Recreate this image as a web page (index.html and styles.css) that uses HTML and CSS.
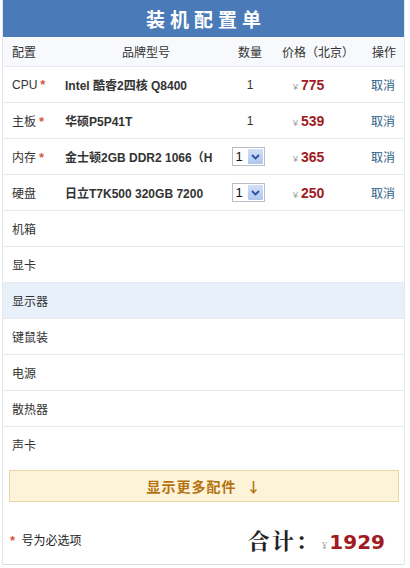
FILE: index.html
```html
<!DOCTYPE html>
<html lang="zh-CN">
<head>
<meta charset="utf-8">
<title>装机配置单</title>
<link rel="stylesheet" href="styles.css">
</head>
<body>
<div class="panel">
  <div class="title">装机配置单</div>
  <div class="row head">
    <div class="c-cat">配置</div>
    <div class="c-name center">品牌型号</div>
    <div class="c-qty">数量</div>
    <div class="c-price center">价格（北京）</div>
    <div class="c-op">操作</div>
  </div>

  <div class="row">
    <div class="c-cat">CPU<span class="req">*</span></div>
    <div class="c-name">Intel 酷睿2四核 Q8400</div>
    <div class="c-qty">1</div>
    <div class="c-price"><span class="yen">¥</span><span class="num">775</span></div>
    <div class="c-op"><span class="link">取消</span></div>
  </div>
  <div class="row">
    <div class="c-cat">主板<span class="req">*</span></div>
    <div class="c-name">华硕P5P41T</div>
    <div class="c-qty">1</div>
    <div class="c-price"><span class="yen">¥</span><span class="num">539</span></div>
    <div class="c-op"><span class="link">取消</span></div>
  </div>
  <div class="row">
    <div class="c-cat">内存<span class="req">*</span></div>
    <div class="c-name">金士顿2GB DDR2 1066（H</div>
    <div class="c-qty"><span class="sel"><span class="sel-v">1</span><span class="sel-b"><svg width="9" height="6" viewBox="0 0 9 6"><path d="M1 1 L4.5 4.5 L8 1" fill="none" stroke="#2c4f9e" stroke-width="1.8"/></svg></span></span></div>
    <div class="c-price"><span class="yen">¥</span><span class="num">365</span></div>
    <div class="c-op"><span class="link">取消</span></div>
  </div>
  <div class="row">
    <div class="c-cat">硬盘</div>
    <div class="c-name">日立T7K500 320GB 7200</div>
    <div class="c-qty"><span class="sel"><span class="sel-v">1</span><span class="sel-b"><svg width="9" height="6" viewBox="0 0 9 6"><path d="M1 1 L4.5 4.5 L8 1" fill="none" stroke="#2c4f9e" stroke-width="1.8"/></svg></span></span></div>
    <div class="c-price"><span class="yen">¥</span><span class="num">250</span></div>
    <div class="c-op"><span class="link">取消</span></div>
  </div>
  <div class="row"><div class="c-cat">机箱</div></div>
  <div class="row"><div class="c-cat">显卡</div></div>
  <div class="row hl"><div class="c-cat">显示器</div></div>
  <div class="row"><div class="c-cat">键鼠装</div></div>
  <div class="row"><div class="c-cat">电源</div></div>
  <div class="row"><div class="c-cat">散热器</div></div>
  <div class="row last"><div class="c-cat">声卡</div></div>

  <div class="more">显示更多配件<span class="arrow">↓</span></div>

  <div class="foot">
    <div class="note"><span class="req">*</span> 号为必选项</div>
    <div class="total"><span class="tlabel">合计：</span><span class="yen big">¥</span><span class="tnum">1929</span></div>
  </div>
</div>
</body>
</html>
```

FILE: styles.css
```css
html, body {
  margin: 0;
  padding: 0;
  background: #ffffff;
}
body {
  font-family: "Liberation Sans", "Noto Sans CJK SC", sans-serif;
  font-size: 12px;
  color: #333333;
}
.panel {
  width: 401px;
  margin-left: 2px;
  border-left: 1px solid #e4e7eb;
  border-right: 1px solid #e4e7eb;
}
.title {
  height: 37px;
  background: #4a7ab7;
  color: #ffffff;
  font-size: 19px;
  font-weight: bold;
  letter-spacing: 5px;
  padding-left: 5px;
  text-align: center;
  line-height: 37px;
  font-family: "Noto Sans CJK SC", sans-serif;
}
.row {
  display: grid;
  grid-template-columns: 60px 166px 42px 92px 1fr;
  align-items: center;
  height: 35px;
  border-bottom: 1px solid #e6e9ed;
}
.row.head {
  height: 29px;
  background: #f7f9fc;
}
.row.hl {
  background: #e8f0fa;
}
.row.last {
  border-bottom: none;
}
.c-cat {
  padding-left: 9px;
  white-space: nowrap;
}
.c-name {
  padding-left: 2px;
  font-weight: bold;
  white-space: nowrap;
}
.head .c-name { font-weight: normal; }
.center { text-align: center; }
.head .c-name.center { padding-left: 0; }
.c-qty {
  text-align: center;
  display: flex;
  justify-content: center;
  align-items: center;
}
.c-price {
  padding-left: 22px;
  display: flex;
  align-items: baseline;
  white-space: nowrap;
}
.head .c-price {
  padding-left: 2px;
  justify-content: center;
}
.c-op {
  padding-left: 8px;
}
.head .c-op {
  padding-left: 9px;
}
.req {
  color: #d65a3c;
  font-weight: bold;
  margin-left: 3px;
  font-size: 13px;
}
.note .req { margin-left: 0; margin-right: 3px; }
.yen {
  color: #a0a0a0;
  font-size: 9px;
  margin-right: 3px;
}
.num {
  color: #a11a1f;
  font-weight: bold;
  font-size: 14px;
}
.link {
  color: #2d6085;
}
.sel {
  display: inline-flex;
  align-items: center;
  width: 31px;
  height: 17px;
  border: 1px solid #b9bfc8;
  background: #fff;
  margin-left: -4px;
}
.sel-v {
  flex: 1;
  text-align: left;
  padding-left: 3px;
  font-size: 13px;
  color: #111;
}
.sel-b {
  width: 15px;
  height: 15px;
  margin-right: 1px;
  background: linear-gradient(#d2e0f8, #b0c6ef);
  border-radius: 1px;
  display: flex;
  align-items: center;
  justify-content: center;
}
.more {
  margin: 8px 5px 0 6px;
  height: 30px;
  border: 1px solid #e6d7a6;
  background: #fdf3d9;
  color: #b5720f;
  font-weight: bold;
  font-size: 14px;
  letter-spacing: 1px;
  text-align: center;
  line-height: 30px;
  font-family: "Noto Sans CJK SC", sans-serif;
}
.arrow {
  margin-left: 10px;
}
.foot {
  display: flex;
  justify-content: space-between;
  align-items: center;
  height: 50px;
  padding: 12px 19px 0 7px;
  border-bottom: 1px solid #d9dcdf;
}
.note {
  font-size: 12px;
  color: #222;
}
.total {
  display: flex;
  align-items: baseline;
  font-size: 22px;
  font-weight: bold;
  color: #222;
  font-family: "Noto Serif CJK SC", "Noto Sans CJK SC", serif;
}
.tlabel {
  letter-spacing: 2px;
  margin-right: 2px;
}
.yen.big {
  font-size: 10px;
  margin-right: 2px;
  font-weight: normal;
}
.tnum {
  color: #a11a1f;
  font-size: 20px;
  font-weight: bold;
  font-family: "DejaVu Sans", sans-serif;
}
```
